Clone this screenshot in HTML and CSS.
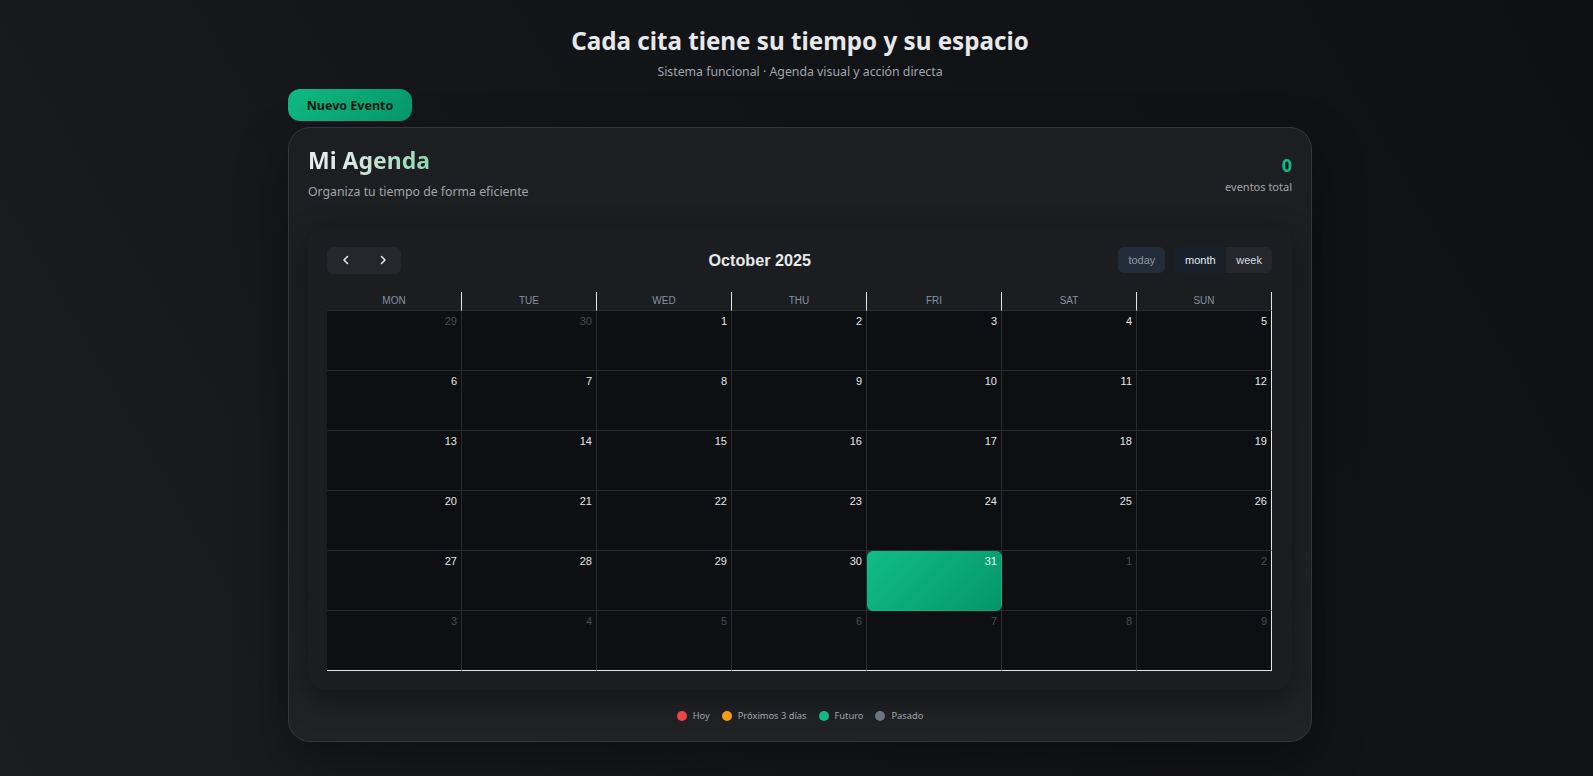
FILE: index.html
```html
<!DOCTYPE html>
<html lang="es">
<head>
<meta charset="utf-8">
<title>Mi Agenda</title>
<link rel="stylesheet" href="styles.css">
</head>
<body>
<div class="page">
  <header class="hero">
    <h1 class="hero-title">Cada cita tiene su tiempo y su espacio</h1>
    <p class="hero-sub">Sistema funcional · Agenda visual y acción directa</p>
  </header>
  <div class="actions">
    <button class="btn-new">Nuevo Evento</button>
  </div>
  <section class="card">
    <div class="card-head">
      <div class="head-left">
        <h2 class="agenda-title">Mi Agenda</h2>
        <p class="agenda-sub">Organiza tu tiempo de forma eficiente</p>
      </div>
      <div class="stat">
        <div class="stat-num">0</div>
        <div class="stat-label">eventos total</div>
      </div>
    </div>
    <div class="cal-panel">
      <div class="toolbar">
        <div class="btn-group nav">
          <button class="nav-btn" aria-label="prev"><svg width="10" height="10" viewBox="0 0 10 10"><path d="M6.5 1.5 L3 5 L6.5 8.5" fill="none" stroke="#e5e7eb" stroke-width="1.6" stroke-linecap="round" stroke-linejoin="round"/></svg></button>
          <button class="nav-btn" aria-label="next"><svg width="10" height="10" viewBox="0 0 10 10"><path d="M3.5 1.5 L7 5 L3.5 8.5" fill="none" stroke="#e5e7eb" stroke-width="1.6" stroke-linecap="round" stroke-linejoin="round"/></svg></button>
        </div>
        <h3 class="cal-title">October 2025</h3>
        <div class="toolbar-right">
          <button class="btn-today">today</button>
          <div class="btn-group views">
            <button class="view-btn active">month</button>
            <button class="view-btn">week</button>
          </div>
        </div>
      </div>
      <div class="grid">
        <div class="dow">MON</div>
        <div class="dow">TUE</div>
        <div class="dow">WED</div>
        <div class="dow">THU</div>
        <div class="dow">FRI</div>
        <div class="dow">SAT</div>
        <div class="dow">SUN</div>

        <div class="day other"><span>29</span></div>
        <div class="day other"><span>30</span></div>
        <div class="day"><span>1</span></div>
        <div class="day"><span>2</span></div>
        <div class="day"><span>3</span></div>
        <div class="day"><span>4</span></div>
        <div class="day end"><span>5</span></div>

        <div class="day"><span>6</span></div>
        <div class="day"><span>7</span></div>
        <div class="day"><span>8</span></div>
        <div class="day"><span>9</span></div>
        <div class="day"><span>10</span></div>
        <div class="day"><span>11</span></div>
        <div class="day end"><span>12</span></div>

        <div class="day"><span>13</span></div>
        <div class="day"><span>14</span></div>
        <div class="day"><span>15</span></div>
        <div class="day"><span>16</span></div>
        <div class="day"><span>17</span></div>
        <div class="day"><span>18</span></div>
        <div class="day end"><span>19</span></div>

        <div class="day"><span>20</span></div>
        <div class="day"><span>21</span></div>
        <div class="day"><span>22</span></div>
        <div class="day"><span>23</span></div>
        <div class="day"><span>24</span></div>
        <div class="day"><span>25</span></div>
        <div class="day end"><span>26</span></div>

        <div class="day"><span>27</span></div>
        <div class="day"><span>28</span></div>
        <div class="day"><span>29</span></div>
        <div class="day"><span>30</span></div>
        <div class="day today"><span>31</span></div>
        <div class="day other"><span>1</span></div>
        <div class="day other end"><span>2</span></div>

        <div class="day other last"><span>3</span></div>
        <div class="day other last"><span>4</span></div>
        <div class="day other last"><span>5</span></div>
        <div class="day other last"><span>6</span></div>
        <div class="day other last"><span>7</span></div>
        <div class="day other last"><span>8</span></div>
        <div class="day other last end"><span>9</span></div>
      </div>
    </div>
    <div class="legend">
      <div class="legend-item"><span class="dot red"></span>Hoy</div>
      <div class="legend-item"><span class="dot orange"></span>Próximos 3 días</div>
      <div class="legend-item"><span class="dot green"></span>Futuro</div>
      <div class="legend-item"><span class="dot gray"></span>Pasado</div>
    </div>
  </section>
</div>
</body>
</html>
```

FILE: styles.css
```css
* { box-sizing: border-box; }

html, body {
  margin: 0;
  padding: 0;
  height: 100%;
}

body {
  font-family: "Noto Sans", "DejaVu Sans", sans-serif;
  background: linear-gradient(60deg, #1c1d21 0%, #141519 45%, #0f1013 100%);
  color: #e5e7eb;
  min-height: 776px;
}

.page {
  width: 1024px;
  margin: 0 auto;
  padding-top: 25px;
  position: relative;
  left: 3.5px;
}

.hero {
  text-align: center;
}

.hero-title {
  margin: 0;
  font-size: 24.2px;
  line-height: 32px;
  font-weight: 700;
  color: #e7e8ea;
}

.hero-sub {
  margin: 5px 0 0;
  font-size: 12.3px;
  line-height: 20px;
  color: #a1a5ad;
}

.actions {
  margin-top: 7px;
  display: flex;
}

.btn-new {
  height: 32px;
  width: 124px;
  border: none;
  border-radius: 12px;
  background: linear-gradient(135deg, #10b981, #059669);
  color: #0c1712;
  font-family: "Noto Sans", sans-serif;
  font-weight: 700;
  font-size: 12.5px;
  padding: 0;
  cursor: pointer;
}

.card {
  margin-top: 6px;
  border: 1px solid #34363c;
  border-radius: 22px;
  background: linear-gradient(180deg, #1d1e22 0%, #212226 100%);
  padding: 16px 19px 19px 19px;
  box-shadow: 0 20px 50px rgba(0, 0, 0, 0.35);
}

.card-head {
  display: flex;
  justify-content: space-between;
  align-items: center;
  height: 57px;
}

.agenda-title {
  margin: 0;
  font-size: 23px;
  line-height: 32px;
  font-weight: 700;
  background: linear-gradient(90deg, #eceef0 0%, #d9e9e1 35%, #8fd6b3 100%);
  -webkit-background-clip: text;
  background-clip: text;
  color: transparent;
  display: inline-block;
}

.agenda-sub {
  margin: 6px 0 0;
  font-size: 12.3px;
  line-height: 20px;
  color: #a1a5ad;
}

.stat {
  text-align: right;
  padding-top: 5px;
}

.stat-num {
  font-size: 18px;
  line-height: 20px;
  font-weight: 700;
  color: #10b981;
}

.stat-label {
  margin-top: 4px;
  font-size: 11px;
  line-height: 16px;
  color: #a1a5ad;
}

.cal-panel {
  margin-top: 25px;
  background: #1c1d21;
  border-radius: 16px;
  padding: 21px 20px 19px 19px;
  box-shadow: 0 10px 30px rgba(0, 0, 0, 0.4);
}

.toolbar {
  display: flex;
  align-items: center;
  justify-content: space-between;
  height: 26px;
  margin-bottom: 19px;
  font-family: "Liberation Sans", Arial, sans-serif;
}

.btn-group {
  display: flex;
  border-radius: 6px;
  overflow: hidden;
}

.nav-btn {
  width: 37px;
  height: 27px;
  border: none;
  background: #26272c;
  display: flex;
  align-items: center;
  justify-content: center;
  padding: 0;
}

.nav-btn svg { display: block; }

.cal-title {
  margin: 0;
  font-size: 16.2px;
  font-weight: 700;
  color: #e8e9eb;
}

.toolbar-right {
  display: flex;
  align-items: center;
  gap: 9px;
}

.btn-today {
  height: 26px;
  padding: 0 10px;
  border: none;
  border-radius: 6px;
  background: #232d3a;
  color: #8e97a4;
  font-family: "Liberation Sans", Arial, sans-serif;
  font-size: 11px;
}

.view-btn {
  height: 26px;
  border: none;
  background: #25272c;
  color: #d6dde7;
  font-family: "Liberation Sans", Arial, sans-serif;
  font-size: 11px;
  padding: 0 10px;
}

.view-btn.active {
  background: #18202a;
  color: #e8edf3;
  width: 52px;
}

.grid {
  display: grid;
  grid-template-columns: repeat(7, 135px);
  grid-template-rows: 19px repeat(6, 60px);
  width: 945px;
  background: #2a2b30;
  font-family: "Liberation Sans", Arial, sans-serif;
}

.dow {
  background: #1c1d21;
  border-right: 1px solid #e6e6e6;
  border-bottom: 1px solid #2a2b30;
  font-size: 10px;
  line-height: 18px;
  text-align: center;
  color: #8591a3;
}

.day {
  background: #0e0f12;
  border-right: 1px solid #2a2b30;
  border-bottom: 1px solid #2a2b30;
  text-align: right;
  padding: 4px 4px 0 0;
  font-size: 11px;
  line-height: 13px;
  color: #e5e7eb;
}

.day span { display: inline-block; }

.day.other { color: #4a4c53; }

.day.end { border-right-color: #e6e6e6; }

.day.last { border-bottom-color: #e6e6e6; }

.day.today {
  background: linear-gradient(135deg, #10bd85 0%, #059669 100%);
  border-radius: 6px;
  border-color: transparent;
  color: #f3fbf7;
}

.legend {
  margin-top: 20px;
  display: flex;
  justify-content: center;
  gap: 12px;
  height: 12px;
  align-items: center;
}

.legend-item {
  display: flex;
  align-items: center;
  gap: 6px;
  font-size: 9.3px;
  line-height: 12px;
  color: #a1a5ad;
}

.dot {
  width: 10px;
  height: 10px;
  border-radius: 50%;
  display: inline-block;
}

.dot.red { background: #ef4444; }
.dot.orange { background: #f59e0b; }
.dot.green { background: #10b981; }
.dot.gray { background: #6b7280; }
```
